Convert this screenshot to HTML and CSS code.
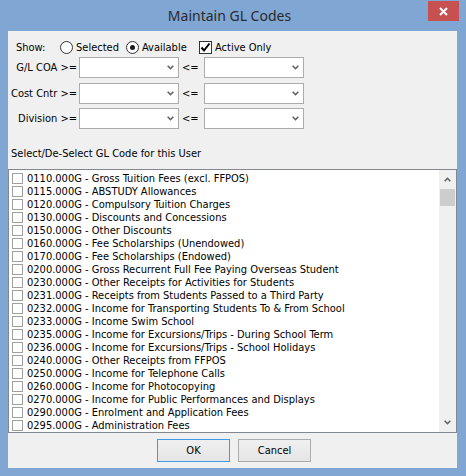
FILE: index.html
```html
<!DOCTYPE html>
<html>
<head>
<meta charset="utf-8">
<title>Maintain GL Codes</title>
<link rel="stylesheet" href="styles.css">
</head>
<body>
<div class="window">
  <div class="titlebar">
    <div class="tb-side"></div>
    <div class="title">Maintain GL Codes</div>
    <div class="tb-side tb-controls">
      <div class="close">
        <svg width="9" height="9" viewBox="0 0 9 9"><path d="M1 1 L8 8 M8 1 L1 8" stroke="#fff" stroke-width="2" fill="none"/></svg>
      </div>
    </div>
  </div>
  <div class="client">
    <div class="show-row">
      <span class="show-label">Show:</span>
      <span class="opt opt-sel"><span class="radio"></span>Selected</span>
      <span class="opt opt-avail"><span class="radio checked"></span>Available</span>
      <span class="opt"><span class="check"><svg width="11" height="11" viewBox="0 0 11 11"><path d="M1.5 5.5 L4 8.5 L9.5 1.5" stroke="#000" stroke-width="2" fill="none"/></svg></span>Active Only</span>
    </div>
    <div class="filters">
      <div class="frow">
        <span class="flabel">G/L COA &gt;=</span>
        <div class="combo"><svg class="chev" width="7" height="5" viewBox="0 0 7 5"><path d="M0.7 0.7 L3.5 3.7 L6.3 0.7" stroke="#606060" stroke-width="1.6" fill="none"/></svg></div>
        <span class="le">&lt;=</span>
        <div class="combo"><svg class="chev" width="7" height="5" viewBox="0 0 7 5"><path d="M0.7 0.7 L3.5 3.7 L6.3 0.7" stroke="#606060" stroke-width="1.6" fill="none"/></svg></div>
      </div>
      <div class="frow">
        <span class="flabel">Cost Cntr &gt;=</span>
        <div class="combo"><svg class="chev" width="7" height="5" viewBox="0 0 7 5"><path d="M0.7 0.7 L3.5 3.7 L6.3 0.7" stroke="#606060" stroke-width="1.6" fill="none"/></svg></div>
        <span class="le">&lt;=</span>
        <div class="combo"><svg class="chev" width="7" height="5" viewBox="0 0 7 5"><path d="M0.7 0.7 L3.5 3.7 L6.3 0.7" stroke="#606060" stroke-width="1.6" fill="none"/></svg></div>
      </div>
      <div class="frow">
        <span class="flabel">Division &gt;=</span>
        <div class="combo"><svg class="chev" width="7" height="5" viewBox="0 0 7 5"><path d="M0.7 0.7 L3.5 3.7 L6.3 0.7" stroke="#606060" stroke-width="1.6" fill="none"/></svg></div>
        <span class="le">&lt;=</span>
        <div class="combo"><svg class="chev" width="7" height="5" viewBox="0 0 7 5"><path d="M0.7 0.7 L3.5 3.7 L6.3 0.7" stroke="#606060" stroke-width="1.6" fill="none"/></svg></div>
      </div>
    </div>
    <div class="caption">Select/De-Select GL Code for this User</div>
    <div class="listbox">
      <div class="items">
        <div class="item"><span class="cb"></span>0110.000G - Gross Tuition Fees (excl. FFPOS)</div>
        <div class="item"><span class="cb"></span>0115.000G - ABSTUDY Allowances</div>
        <div class="item"><span class="cb"></span>0120.000G - Compulsory Tuition Charges</div>
        <div class="item"><span class="cb"></span>0130.000G - Discounts and Concessions</div>
        <div class="item"><span class="cb"></span>0150.000G - Other Discounts</div>
        <div class="item"><span class="cb"></span>0160.000G - Fee Scholarships (Unendowed)</div>
        <div class="item"><span class="cb"></span>0170.000G - Fee Scholarships (Endowed)</div>
        <div class="item"><span class="cb"></span>0200.000G - Gross Recurrent Full Fee Paying Overseas Student</div>
        <div class="item"><span class="cb"></span>0230.000G - Other Receipts for Activities for Students</div>
        <div class="item"><span class="cb"></span>0231.000G - Receipts from Students Passed to a Third Party</div>
        <div class="item"><span class="cb"></span>0232.000G - Income for Transporting Students To &amp; From School</div>
        <div class="item"><span class="cb"></span>0233.000G - Income Swim School</div>
        <div class="item"><span class="cb"></span>0235.000G - Income for Excursions/Trips - During School Term</div>
        <div class="item"><span class="cb"></span>0236.000G - Income for Excursions/Trips - School Holidays</div>
        <div class="item"><span class="cb"></span>0240.000G - Other Receipts from FFPOS</div>
        <div class="item"><span class="cb"></span>0250.000G - Income for Telephone Calls</div>
        <div class="item"><span class="cb"></span>0260.000G - Income for Photocopying</div>
        <div class="item"><span class="cb"></span>0270.000G - Income for Public Performances and Displays</div>
        <div class="item"><span class="cb"></span>0290.000G - Enrolment and Application Fees</div>
        <div class="item"><span class="cb"></span>0295.000G - Administration Fees</div>
      </div>
      <div class="vscroll">
        <div class="sarrow"><svg width="7" height="5" viewBox="0 0 7 5"><path d="M0.7 4.3 L3.5 1.3 L6.3 4.3" stroke="#606060" stroke-width="1.6" fill="none"/></svg></div>
        <div class="thumb"></div>
        <div class="track"></div>
        <div class="sarrow"><svg width="7" height="5" viewBox="0 0 7 5"><path d="M0.7 0.7 L3.5 3.7 L6.3 0.7" stroke="#606060" stroke-width="1.6" fill="none"/></svg></div>
      </div>
    </div>
    <div class="buttons">
      <button class="btn btn-default">OK</button>
      <button class="btn">Cancel</button>
    </div>
  </div>
</div>
</body>
</html>
```
FILE: styles.css
```css
html, body {
  margin: 0;
  padding: 0;
  background: #7fa5d3;
}
body {
  font-family: "DejaVu Sans", "Liberation Sans", sans-serif;
  font-stretch: condensed;
  font-size: 11px;
  color: #000;
}
.window {
  width: 466px;
  height: 476px;
  box-sizing: border-box;
  background: #80a6d4;
  padding: 0 9px 8px 8px;
  display: flex;
  flex-direction: column;
}
.titlebar {
  height: 31px;
  flex: none;
  display: grid;
  grid-template-columns: 1fr auto 1fr;
}
.title {
  font-family: "Noto Sans", "Open Sans", sans-serif;
  font-stretch: normal;
  font-size: 14px;
  line-height: 31px;
  color: #2a2a2a;
  padding-right: 6px;
}
.tb-controls {
  display: flex;
  justify-content: flex-end;
  align-items: flex-start;
}
.close {
  width: 31px;
  height: 20px;
  margin-top: 1px;
  margin-right: -2px;
  background: #c75050;
  display: flex;
  align-items: center;
  justify-content: center;
}
.client {
  flex: 1;
  background: #f0f0f0;
  display: flex;
  flex-direction: column;
  padding-top: 8px;
}
.show-row {
  height: 16px;
  display: flex;
  align-items: center;
  padding-left: 8px;
}
.show-label {
  width: 44px;
}
.opt {
  display: flex;
  align-items: center;
}
.opt-sel { width: 66px; }
.opt-avail { width: 73px; }
.radio {
  width: 13px;
  height: 13px;
  box-sizing: border-box;
  border: 1px solid #333;
  border-radius: 50%;
  background: #fff;
  margin-right: 3px;
  display: flex;
  align-items: center;
  justify-content: center;
}
.radio.checked::after {
  content: "";
  width: 5px;
  height: 5px;
  border-radius: 50%;
  background: #1a1a1a;
}
.check {
  width: 13px;
  height: 13px;
  box-sizing: border-box;
  border: 1px solid #333;
  background: #fff;
  margin-right: 3px;
  display: flex;
  align-items: center;
  justify-content: center;
}
.filters {
  margin-top: 2px;
  display: flex;
  flex-direction: column;
  gap: 4.5px;
}
.frow {
  height: 21px;
  display: flex;
  align-items: center;
}
.flabel {
  width: 69px;
  text-align: right;
  white-space: nowrap;
}
.combo {
  width: 100px;
  height: 21px;
  box-sizing: border-box;
  border: 1px solid #acacac;
  background: #fff;
  margin-left: 2px;
  display: flex;
  align-items: center;
  justify-content: flex-end;
  padding-right: 4px;
}
.combo:last-child { margin-left: 0; }
.le {
  width: 22px;
  margin-left: 3px;
}
.caption {
  margin-top: 18px;
  padding-left: 3px;
  line-height: 13px;
}
.listbox {
  margin-top: 9px;
  height: 264px;
  box-sizing: border-box;
  border: 1px solid #828790;
  background: #fff;
  display: flex;
}
.items {
  flex: 1;
  padding-top: 2px;
  overflow: hidden;
}
.item {
  height: 13px;
  line-height: 13px;
  display: flex;
  align-items: center;
  white-space: nowrap;
}
.cb {
  width: 11px;
  height: 11px;
  box-sizing: border-box;
  border: 1px solid #a0a0a0;
  background: #fff;
  margin-left: 3px;
  margin-right: 4px;
  flex: none;
}
.vscroll {
  width: 17px;
  background: #f0f0f0;
  display: flex;
  flex-direction: column;
}
.sarrow {
  height: 19px;
  display: flex;
  align-items: center;
  justify-content: center;
  flex: none;
}
.thumb {
  height: 17px;
  background: #cdcdcd;
  margin: 0 1px 0 1px;
  flex: none;
}
.track { flex: 1; }
.buttons {
  margin-top: 6px;
  display: flex;
  gap: 8px;
  padding-left: 149px;
}
.btn {
  width: 73px;
  height: 23px;
  box-sizing: border-box;
  border: 1px solid #acacac;
  background: linear-gradient(#f0f0f0, #e5e5e5);
  font-family: "DejaVu Sans", "Liberation Sans", sans-serif;
  font-stretch: condensed;
  font-size: 11px;
  color: #000;
  padding: 0;
  margin: 0;
}
.btn-default {
  border-color: #3c9ae8;
}
```
